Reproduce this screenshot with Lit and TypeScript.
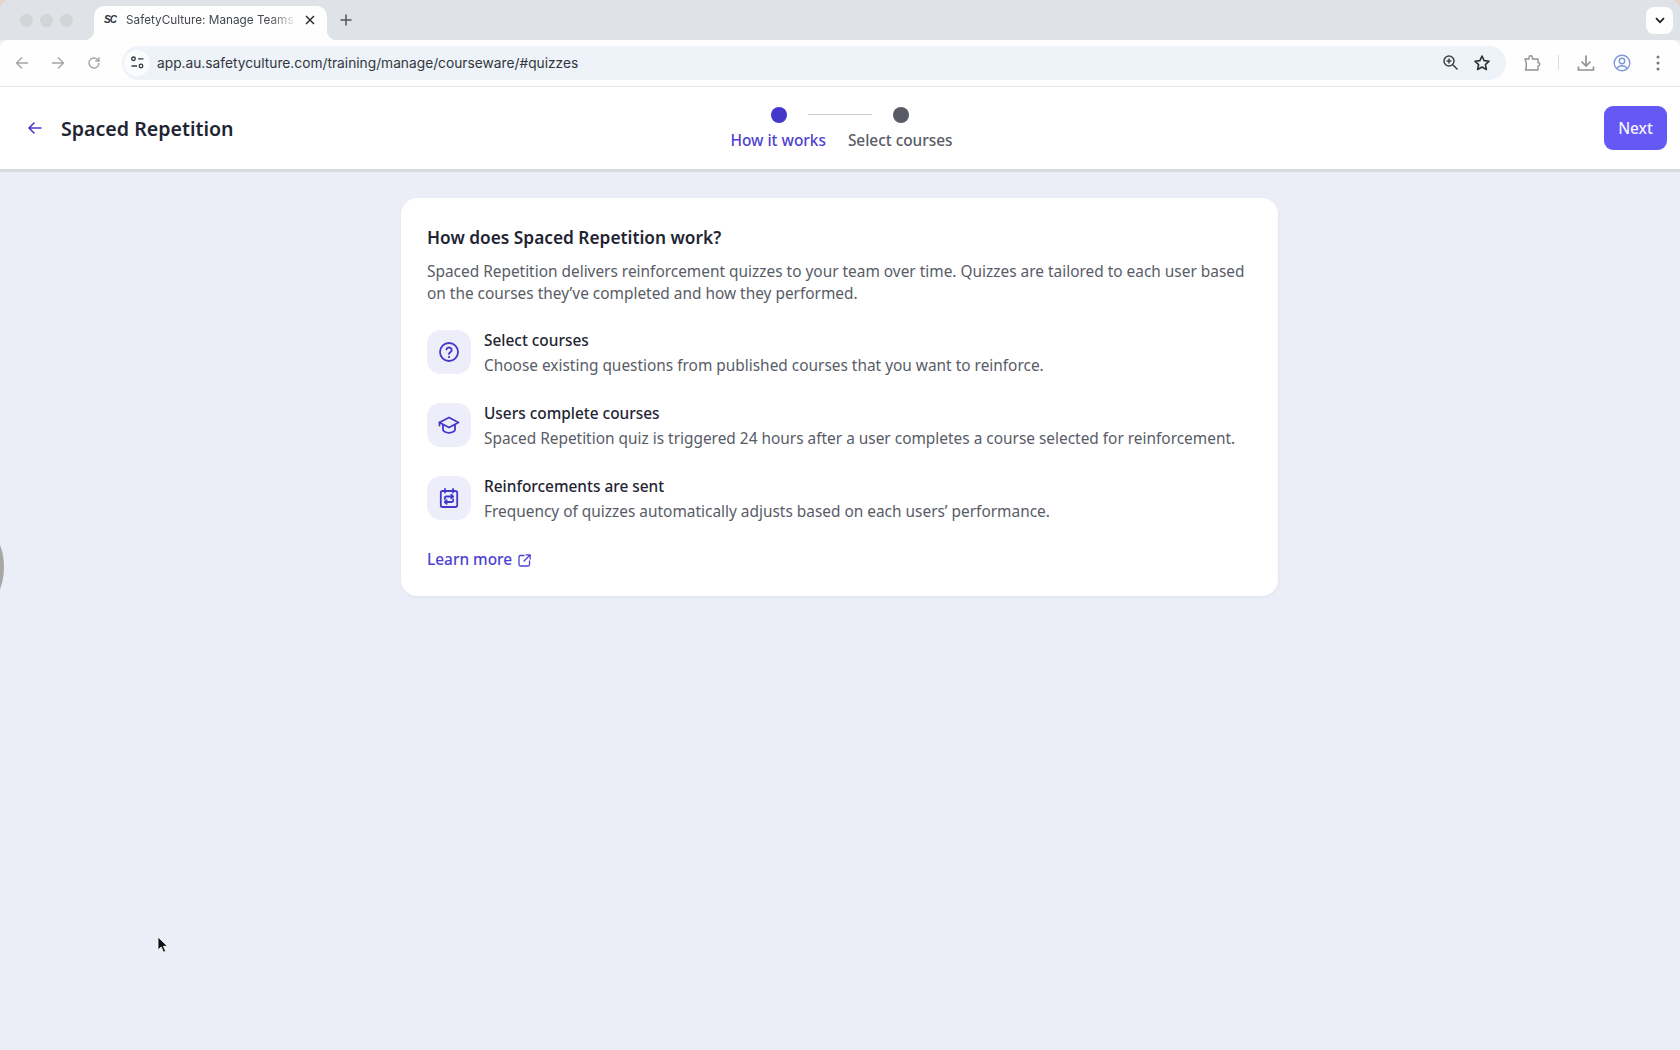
import { LitElement, html, css, svg } from "lit";
import { customElement } from "lit/decorators.js";

const steps = [
  {
    title: "Select courses",
    body: "Choose existing questions from published courses that you want to reinforce.",
    icon: svg`<circle cx="12" cy="12" r="9"/><path d="M9.400 9.500a2.700 2.700 0 0 1 5.300.7c0 1.900-2.700 2.200-2.700 3.800"/><path d="M12 17v.1" stroke-width="2.200"/>`,
  },
  {
    title: "Users complete courses",
    body: "Spaced Repetition quiz is triggered 24 hours after a user completes a course selected for reinforcement.",
    icon: svg`<path d="M12 4.500 2.500 9.500l9.500 5 9.500-5-9.500-5Z"/><path d="M6 11.800v4.700c0 1.700 2.700 3.300 6 3.300s6-1.600 6-3.300v-4.700"/><path d="M2.500 9.500v3"/>`,
  },
  {
    title: "Reinforcements are sent",
    body: "Frequency of quizzes automatically adjusts based on each users’ performance.",
    icon: svg`<rect x="3.800" y="5" width="16.400" height="16" rx="1.800"/><path d="M8 3v3.500M16 3v3.500"/><path d="M7.800 13v-1a1.500 1.500 0 0 1 1.500-1.500H16M14.300 8.700l1.900 1.800-1.900 1.800"/><path d="M16.200 13.500v1a1.500 1.500 0 0 1-1.500 1.500H8M9.700 14.200 7.800 16l1.900 1.800"/>`,
  },
];

@customElement("app-root")
export class AppRoot extends LitElement {
  static styles = css`
    :host {
      display: block;
      height: 1050px;
      overflow: hidden;
      background: #e3d5cb;
      font-family: "Noto Sans", sans-serif;
    }
    .window {
      position: relative;
      height: 100%;
      display: flex;
      flex-direction: column;
      border-radius: 10px 10px 0 0;
      overflow: hidden;
      background: #ebeef7;
    }
    .tabstrip {
      height: 40px;
      flex: none;
      background: #dfe3e7;
      display: flex;
      align-items: flex-end;
      padding-left: 20px;
      padding-right: 8px;
      box-sizing: border-box;
    }
    .lights {
      display: flex;
      gap: 7px;
      align-self: flex-start;
      margin-top: 14px;
    }
    .lights i {
      width: 13px;
      height: 13px;
      border-radius: 50%;
      background: #d2d4d7;
    }
    .tab {
      position: relative;
      margin-left: 21px;
      width: 233px;
      height: 34px;
      box-sizing: border-box;
      background: #fefefe;
      border-radius: 10px 10px 0 0;
      display: flex;
      align-items: center;
      padding: 0 12px 7px 10px;
      font: 11.750px Inter, "Liberation Sans", sans-serif;
      color: #44484d;
    }
    .tab::before,
    .tab::after {
      content: "";
      position: absolute;
      bottom: 0;
      width: 10px;
      height: 10px;
    }
    .tab::before {
      left: -10px;
      background: radial-gradient(circle at 0 0, transparent 10px, #fefefe 10.500px);
    }
    .tab::after {
      right: -10px;
      background: radial-gradient(circle at 100% 0, transparent 10px, #fefefe 10.500px);
    }
    .fav {
      width: 14px;
      font: italic 700 10px "Liberation Sans", sans-serif;
      letter-spacing: -0.800px;
      color: #2c3340;
      margin-right: 8px;
    }
    .tabtitle {
      flex: 1;
      white-space: nowrap;
      overflow: hidden;
      -webkit-mask-image: linear-gradient(90deg, #000 80%, transparent 96%);
      mask-image: linear-gradient(90deg, #000 80%, transparent 96%);
    }
    .plus {
      margin-left: 9px;
      margin-bottom: 10px;
      display: flex;
    }
    .spacer {
      flex: 1;
    }
    .chev {
      width: 27px;
      height: 27px;
      margin-bottom: 6px;
      margin-right: -1px;
      background: #fefefe;
      border-radius: 8px;
      display: flex;
      align-items: center;
      justify-content: center;
    }
    .toolbar {
      height: 47px;
      flex: none;
      box-sizing: border-box;
      background: #fefefe;
      border-bottom: 1px solid #e6e8ec;
      border-radius: 8px 8px 0 0;
      display: flex;
      align-items: center;
      padding: 0 0 1px 14px;
    }
    .nav {
      display: flex;
      gap: 20px;
      margin-right: 20px;
    }
    .nav svg {
      display: block;
    }
    .url {
      width: 1384px;
      height: 34px;
      border-radius: 17px;
      background: #eef2f9;
      display: flex;
      align-items: center;
      padding: 0 15px 0 2px;
      box-sizing: border-box;
      font: 13.750px Inter, "Liberation Sans", sans-serif;
      color: #33373c;
    }
    .tune {
      width: 26px;
      height: 26px;
      border-radius: 50%;
      background: #fbfcfe;
      display: flex;
      align-items: center;
      justify-content: center;
      margin-right: 7px;
    }
    .urltext {
      flex: 1;
    }
    .urlicons {
      display: flex;
      gap: 14px;
      align-items: center;
    }
    .tools {
      display: flex;
      align-items: center;
      margin-left: 17px;
    }
    .sep {
      width: 1px;
      height: 15px;
      background: #d3dcec;
      margin: 0 18px 0 17px;
    }
    .gap1 {
      margin-left: 18px;
    }
    .gap2 {
      margin-left: 25px;
    }
    .header {
      height: 85px;
      flex: none;
      box-sizing: border-box;
      background: #fff;
      border-bottom: 3px solid #d9dae1;
      display: grid;
      grid-template-columns: 1fr auto 1fr;
      align-items: center;
      padding: 0 13px;
    }
    .back {
      display: flex;
      align-items: center;
      gap: 17px;
      margin-left: 13px;
    }
    h1 {
      margin: 0;
      font-size: 19.600px;
      font-weight: 600;
      color: #1f2533;
    }
    .stepper {
      display: flex;
      flex-direction: column;
      align-items: center;
      gap: 7px;
      margin: 1px 0 0 3px;
    }
    .dots {
      display: flex;
      align-items: center;
      margin-right: 2px;
    }
    .dot {
      width: 16px;
      height: 16px;
      border-radius: 50%;
      background: #585a66;
    }
    .dot.on {
      background: #4338ca;
    }
    .rail {
      width: 64px;
      height: 1px;
      background: #c9ccd3;
      margin: 0 21px;
    }
    .labels {
      display: flex;
      gap: 22px;
      font-size: 15.400px;
      font-weight: 500;
      color: #585c67;
    }
    .labels .on {
      color: #4d42cf;
    }
    .next {
      justify-self: end;
      width: 63px;
      height: 44px;
      border: 0;
      border-radius: 9px;
      background: #6559f5;
      color: #f4f3ff;
      font: 500 15.400px "Noto Sans", sans-serif;
      padding: 0;
    }
    .main {
      flex: 1;
      display: flex;
      justify-content: center;
      align-items: flex-start;
      padding-top: 26px;
      padding-right: 1px;
    }
    .card {
      width: 877px;
      box-sizing: border-box;
      background: #fff;
      border-radius: 16px;
      padding: 28px 26px 24px;
      box-shadow: 0 1px 3px rgba(60, 65, 90, 0.07);
    }
    h2 {
      margin: 0 0 11px;
      font-size: 17.300px;
      line-height: 24px;
      font-weight: 600;
      color: #1f2533;
    }
    .intro {
      margin: 0;
      font-size: 15.420px;
      line-height: 21.500px;
      color: #585c67;
    }
    .list {
      display: flex;
      flex-direction: column;
      gap: 22px;
      margin-top: 23px;
    }
    .item {
      display: flex;
      gap: 13px;
      align-items: center;
    }
    .itext {
      padding-top: 2px;
    }
    .badge {
      width: 44px;
      height: 44px;
      flex: none;
      margin-bottom: 2px;
      border-radius: 14px;
      background: #eeeefb;
      display: flex;
      align-items: center;
      justify-content: center;
    }
    .badge svg {
      width: 24px;
      height: 24px;
      fill: none;
      stroke: #4338ca;
      stroke-width: 1.800;
      stroke-linecap: round;
      stroke-linejoin: round;
    }
    .ititle {
      font-size: 15.420px;
      line-height: 24px;
      font-weight: 500;
      color: #1f2533;
    }
    .ibody {
      font-size: 15.420px;
      line-height: 25px;
      color: #585c67;
    }
    .learn {
      display: inline-flex;
      align-items: center;
      gap: 5px;
      margin-top: 24px;
      font-size: 15.420px;
      line-height: 24px;
      font-weight: 500;
      color: #4d42cf;
      text-decoration: none;
    }
    .blob {
      position: absolute;
      left: -36px;
      top: 530px;
      width: 40px;
      height: 74px;
      border-radius: 50%;
      background: #a9a6a6;
      filter: blur(0.600px);
    }
    .cursor {
      position: absolute;
      left: 157px;
      top: 936px;
    }
  `;

  render() {
    return html`
      <div class="window">
        <div class="tabstrip">
          <div class="lights"><i></i><i></i><i></i></div>
          <div class="tab">
            <span class="fav">SC</span>
            <span class="tabtitle">SafetyCulture: Manage Teams</span>
            <svg width="10" height="10" viewBox="0 0 10 10"><path d="M1 1l8 8M9 1l-8 8" stroke="#2b2e33" stroke-width="1.500"/></svg>
          </div>
          <div class="plus">
            <svg width="20" height="20" viewBox="0 0 20 20"><path d="M10 4.500v11M4.500 10h11" stroke="#555" stroke-width="1.500"/></svg>
          </div>
          <div class="spacer"></div>
          <div class="chev">
            <svg width="10" height="7" viewBox="0 0 10 7"><path d="M1 1.200l4 4 4-4" fill="none" stroke="#222" stroke-width="1.700"/></svg>
          </div>
        </div>
        <div class="toolbar">
          <div class="nav">
            <svg width="16" height="16" viewBox="0 0 16 16" fill="none" stroke="#a3a6aa" stroke-width="1.400"><path d="M14 8H2.500M8 2.500 2.500 8 8 13.500"/></svg>
            <svg width="16" height="16" viewBox="0 0 16 16" fill="none" stroke="#a3a6aa" stroke-width="1.400"><path d="M2 8h11.500M8 2.500 13.500 8 8 13.500"/></svg>
            <svg width="16" height="16" viewBox="0 0 16 16" fill="none" stroke="#a3a6aa" stroke-width="1.400"><path d="M13 8a5 5 0 1 1-1.500-3.600L13 6M13 2.200V6H9.200"/></svg>
          </div>
          <div class="url">
            <span class="tune">
              <svg width="15" height="15" viewBox="0 0 15 15" fill="none" stroke="#33373c" stroke-width="1.300"><circle cx="3.500" cy="3.800" r="1.800"/><path d="M8 3.800h5.500M1.500 11H7"/><circle cx="11" cy="11" r="1.800"/></svg>
            </span>
            <span class="urltext">app.au.safetyculture.com/training/manage/courseware/#quizzes</span>
            <span class="urlicons">
              <svg width="17" height="17" viewBox="0 0 17 17" fill="none" stroke="#3f4246" stroke-width="1.500"><circle cx="7" cy="7" r="5"/><path d="M10.800 10.800 15.500 15.500M4.600 7h4.800M7 4.600v4.800"/></svg>
              <svg width="18" height="18" viewBox="0 0 18 18" fill="none" stroke="#2f3236" stroke-width="1.600" stroke-linejoin="round"><path d="m9 2 2.100 4.600 5 .6-3.700 3.400 1 4.900L9 13l-4.400 2.500 1-4.900L1.900 7.200l5-.6L9 2Z"/></svg>
            </span>
          </div>
          <div class="tools">
            <svg width="18" height="18" viewBox="0 0 18 18" fill="none" stroke="#8f9296" stroke-width="1.400" stroke-linejoin="round"><path d="M2 5h4V3.500a1.700 1.700 0 0 1 3.400 0V5H15v3.500a1.700 1.700 0 0 1 0 3.400V16H2.500l.8-3V9L2 5Z"/></svg>
            <span class="sep"></span>
            <svg width="18" height="18" viewBox="0 0 18 18" fill="none" stroke="#8f9296" stroke-width="1.700"><path d="M9 1.500v10M4.500 7.500 9 12l4.500-4.500M1.500 12.500V16h15v-3.500"/></svg>
            <svg class="gap1" width="18" height="18" viewBox="0 0 18 18" fill="none" stroke="#7d97d8" stroke-width="1.400"><circle cx="9" cy="9" r="7.800"/><circle cx="9" cy="7" r="2.700"/><path d="M3.800 14.500c1.300-2 3.200-2.800 5.200-2.800s3.900.8 5.200 2.800"/></svg>
            <svg class="gap2" width="4" height="16" viewBox="0 0 4 16" fill="#75787c"><circle cx="2" cy="2" r="1.500"/><circle cx="2" cy="8" r="1.500"/><circle cx="2" cy="14" r="1.500"/></svg>
          </div>
        </div>
        <header class="header">
          <div class="back">
            <svg width="18" height="18" viewBox="0 0 18 18" fill="none" stroke="#4338ca" stroke-width="1.500"><path d="M15.500 9H3M8.500 3.500 3 9l5.500 5.500"/></svg>
            <h1>Spaced Repetition</h1>
          </div>
          <div class="stepper">
            <div class="dots">
              <span class="dot on"></span><span class="rail"></span><span class="dot"></span>
            </div>
            <div class="labels"><span class="on">How it works</span><span>Select courses</span></div>
          </div>
          <button class="next">Next</button>
        </header>
        <main class="main">
          <section class="card">
            <h2>How does Spaced Repetition work?</h2>
            <p class="intro">
              Spaced Repetition delivers reinforcement quizzes to your team over time. Quizzes are tailored to each user based on the courses they’ve completed and how they performed.
            </p>
            <div class="list">
              ${steps.map(
                (s) => html`
                  <div class="item">
                    <span class="badge"><svg viewBox="0 0 24 24">${s.icon}</svg></span>
                    <div class="itext">
                      <div class="ititle">${s.title}</div>
                      <div class="ibody">${s.body}</div>
                    </div>
                  </div>
                `
              )}
            </div>
            <a class="learn" href="#">Learn more
              <svg width="15" height="15" viewBox="0 0 15 15" fill="none" stroke="#4d42cf" stroke-width="1.300" stroke-linecap="round" stroke-linejoin="round"><path d="M7 2.500H3.500a1.500 1.500 0 0 0-1.500 1.500v7.500A1.500 1.500 0 0 0 3.500 13H11a1.500 1.500 0 0 0 1.500-1.500V8M9 1.800h4.200V6M13 2 7 8"/></svg>
            </a>
          </section>
        </main>
        <div class="blob"></div>
        <svg class="cursor" width="12" height="18" viewBox="0 0 12 18"><path d="M1 1v13l3.200-3 2.300 5.300 2.200-1-2.300-5H10.500L1 1Z" fill="#111" stroke="#fff" stroke-width="0.800"/></svg>
      </div>
    `;
  }
}
